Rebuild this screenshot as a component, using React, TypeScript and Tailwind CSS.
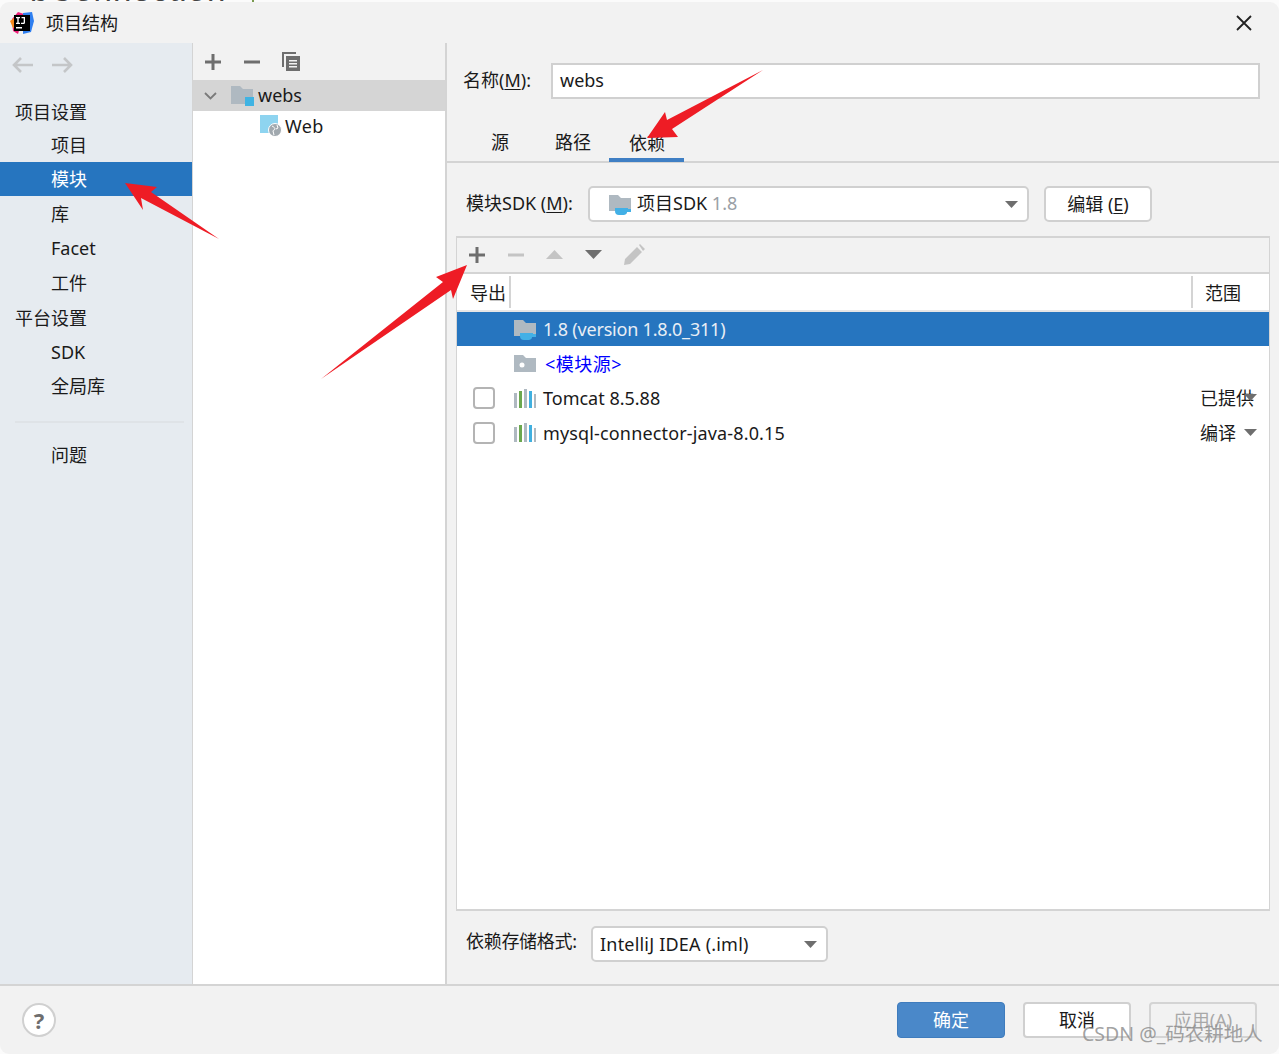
import React from "react";

const Plus = ({ c = "#6e6e6e" }: { c?: string }) => (
  <svg width="16" height="16" viewBox="0 0 16 16"><path d="M6.500 0h3v6.500H16v3H9.500V16h-3V9.500H0v-3h6.500z" fill={c} /></svg>
);
const Minus = ({ c = "#6e6e6e" }: { c?: string }) => (
  <svg width="16" height="16" viewBox="0 0 16 16"><rect x="0" y="6.500" width="16" height="3" fill={c} /></svg>
);
const Caret = ({ c = "#6e6e6e", w = 13, h = 7 }: { c?: string; w?: number; h?: number }) => (
  <svg width={w} height={h} viewBox="0 0 13 7"><path d="M0 0h13L6.500 7z" fill={c} /></svg>
);
const SdkFolder = () => (
  <svg width="22" height="21" viewBox="0 0 22 21">
    <path d="M0 1h9l3 3h10v13H0z" fill="#afb9c1" />
    <path d="M6 14h13v1h3v3h-4a5 3 0 0 1-3 3H10a4 4 0 0 1-4-4z" fill="#42b0e6" />
  </svg>
);
const Lib = () => (
  <svg width="22" height="19" viewBox="0 0 22 19">
    <rect x="0" y="4" width="3" height="15" fill="#afb9c1" />
    <rect x="5" y="2" width="3" height="17" fill="#6ba84f" />
    <rect x="10" y="0" width="3" height="19" fill="#afb9c1" />
    <rect x="15" y="2" width="3" height="17" fill="#40b0e0" />
    <rect x="20" y="5" width="2" height="14" fill="#afb9c1" />
  </svg>
);
const Logo = () => (
  <svg width="24" height="24" viewBox="0 0 24 24">
    <path d="M2 8 8 1l6 2-6 20-5-3z" fill="#f0207a" />
    <path d="M13 2l9-1 2 9-3 11-8 2z" fill="#2f7ff0" />
    <path d="M0 10l4-3 2 9-3 1z" fill="#f78a1e" />
    <rect x="4" y="4" width="16" height="16" fill="#000" />
    <rect x="6" y="16" width="6" height="1.500" fill="#fff" />
    <path d="M6 6h4v1.300H8.700v4.400H10V13H6v-1.300h1.300V7.300H6zM11.500 6H15v5.500a1.500 1.500 0 0 1-1.500 1.500H11v-1.300h2.300a.4.4 0 0 0 .4-.4V7.300h-2.200z" fill="#fff" />
  </svg>
);

const SidebarItem = ({ text, head, selected, short }: { text: string; head?: boolean; selected?: boolean; short?: boolean }) => (
  <div className={`${short ? "h-[32.400px]" : selected ? "h-[34px] mb-[1px]" : "h-[34.400px]"} flex items-center ${head ? "pl-[15px] pt-[2px]" : "pl-[51px]"} ${selected ? "bg-[#2675bf] text-white" : "text-[#1a1a1a]"}`}>{text}</div>
);

const Combo = ({ className, children }: { className: string; children: React.ReactNode }) => (
  <div className={`h-[36px] bg-white border-2 border-[#d0d0d0] rounded-[5px] flex items-center ${className}`}>
    {children}
  </div>
);

const Row = ({ check, icon, children, scope, selected, textClass }: { check?: boolean; icon: React.ReactNode; children: React.ReactNode; scope?: string; selected?: boolean; textClass?: string }) => (
  <div className={`flex items-center ${selected ? "h-[34px] mb-[0.5px] bg-[#2675bf] text-[#e8eef5]" : "h-[34.500px] text-[#1a1a1a]"}`}>
    <div className="w-[57px] pl-[16px] shrink-0">
      {check && <div className="w-[22px] h-[22px] border-2 border-[#b4b4b4] rounded-[4px] bg-white" />}
    </div>
    <div className="w-[22px] shrink-0 flex items-center">{icon}</div>
    <div className={`ml-[7px] flex-1 ${textClass ?? ""}`}>{children}</div>
    {scope && (
      <div className="relative w-[69px] shrink-0">
        {scope}
        <span className="absolute top-[5px] left-[44px] flex"><Caret /></span>
      </div>
    )}
  </div>
);

export default function App() {
  return (
    <div className="relative w-[1279px] h-[1054px] overflow-hidden bg-[#fbfbfb] font-['Noto_Sans','Noto_Sans_CJK_SC',sans-serif] text-[18px] leading-none text-[#1a1a1a]">
      <div className="h-[2px] overflow-hidden pl-[30px] flex text-[33px] leading-[0px] text-[#444] tracking-[1px] font-['Liberation_Sans',sans-serif]">
        <div className="mt-[-10px]">bConnection</div>
        <div className="ml-[26px] w-[2px] h-[2px] bg-[#7a9a50]" />
      </div>
      <div className="h-[1052px] flex flex-col bg-[#f2f2f2] rounded-[9px] overflow-hidden">
        {/* title */}
        <div className="h-[41px] shrink-0 flex items-center pl-[10px] pr-[27px]">
          <Logo />
          <span className="ml-[12px]">项目结构</span>
          <svg className="ml-auto" width="16" height="16" viewBox="0 0 16 16"><path d="M1 1l14 14M15 1L1 15" stroke="#222" strokeWidth="1.800" /></svg>
        </div>
        {/* body */}
        <div className="flex-1 min-h-0 flex border-b-2 border-[#d4d4d4]">
          {/* sidebar */}
          <div className="w-[192px] shrink-0 bg-[#e6ebf0]">
            <div className="h-[52px] flex items-center pl-[12px] pb-[8px] gap-[19px]">
              <svg width="21" height="16" viewBox="0 0 21 16"><path d="M9 1 2 8l7 7M2 8h19" fill="none" stroke="#c4c6c8" strokeWidth="2.600" /></svg>
              <svg width="21" height="16" viewBox="0 0 21 16"><path d="M12 1l7 7-7 7M19 8H0" fill="none" stroke="#c4c6c8" strokeWidth="2.600" /></svg>
            </div>
            <SidebarItem text="项目设置" head short />
            <SidebarItem text="项目" />
            <SidebarItem text="模块" selected />
            <SidebarItem text="库" />
            <SidebarItem text="Facet" />
            <SidebarItem text="工件" />
            <SidebarItem text="平台设置" head />
            <SidebarItem text="SDK" />
            <SidebarItem text="全局库" />
            <div className="h-[34.400px] flex items-center pt-[3px] pl-[15px] pr-[8px]"><div className="w-full h-[2px] bg-[#dfe3e7]" /></div>
            <SidebarItem text="问题" />
          </div>
          {/* middle */}
          <div className="w-[255px] shrink-0 flex flex-col bg-white border-l border-[#d4d4d4] border-r-2">
            <div className="h-[37px] shrink-0 bg-[#f2f2f2] flex items-center pl-[12px]">
              <Plus />
              <span className="ml-[23px] flex"><Minus /></span>
              <svg className="ml-[22px]" width="19" height="20" viewBox="0 0 19 20">
                <path d="M0 0h14v2H2v13H0z" fill="#6e6e6e" />
                <path d="M4 4h14v15H4z" fill="#6e6e6e" />
                <path d="M7 8h8v1.500H7zM7 11h8v1.500H7zM7 14h8v1.500H7z" fill="#f2f2f2" />
              </svg>
            </div>
            <div className="h-[31px] shrink-0 bg-[#d5d5d5] flex items-center pl-[11px]">
              <svg width="13" height="8" viewBox="0 0 13 8"><path d="M1 1l5.500 5.500L12 1" fill="none" stroke="#7a7a7a" strokeWidth="1.800" /></svg>
              <svg className="ml-[14px]" width="23" height="22" viewBox="0 0 23 22">
                <path d="M0 1h9l3 3h10v15H0z" fill="#afb9c1" />
                <rect x="14" y="12" width="9" height="9" fill="#3fb3e3" />
              </svg>
              <span className="ml-[4px] -translate-y-[1px]">webs</span>
            </div>
            <div className="h-[30px] shrink-0 flex items-center pl-[67px]">
              <svg width="22" height="22" viewBox="0 0 22 22">
                <rect x="0" y="0" width="18" height="18" fill="#8ed4f0" />
                <circle cx="15" cy="15" r="6.500" fill="#a0a8ae" stroke="#fff" strokeWidth="1" />
                <path d="M12 11c2 1 3 2 3 3s-2 1-2 2l1 4M17 10l1 3-2 1" fill="none" stroke="#fff" strokeWidth="1" />
              </svg>
              <span className="ml-[3px] tracking-[0.4px]">Web</span>
            </div>
          </div>
          {/* right */}
          <div className="flex-1 min-w-0 flex flex-col">
            <div className="h-[56px] shrink-0 flex items-end pl-[16px] pr-[19px]">
              <div className="h-[36px] flex items-center w-[88px] shrink-0 -translate-y-[1px]">名称(<span className="underline underline-offset-2">M</span>):</div>
              <div className="flex-1 h-[36px] bg-white border-2 border-[#d0d0d0] flex items-center pl-[7px]"><span className="-translate-y-[1px]">webs</span></div>
            </div>
            <div className="h-[64px] shrink-0 flex items-end border-b-2 border-[#d4d4d4] pl-[23px]">
              <div className="w-[60px] h-[33px] flex justify-center pt-[5px]">源</div>
              <div className="w-[86px] h-[33px] flex justify-center pt-[5px]">路径</div>
              <div className="w-[75px] h-[33px] flex justify-center pt-[5px] pl-[1px] border-b-4 border-[#3f7fc4] -mb-[1px] -ml-[7px]">依赖</div>
            </div>
            <div className="h-[73px] shrink-0 flex items-start pt-[23px] pl-[19px]">
              <div className="w-[122px] h-[36px] flex items-center shrink-0 -translate-y-[1px]">模块SDK (<span className="underline underline-offset-2">M</span>):</div>
              <Combo className="w-[441px] pl-[19px] relative">
                <SdkFolder />
                <span className="ml-[6px] -translate-y-[1px]">项目SDK <span className="text-[#9aa0a6]">1.8</span></span>
                <span className="absolute right-[9px] top-[13px] flex"><Caret /></span>
              </Combo>
              <div className="ml-[15px] w-[108px] h-[36px] bg-white border-2 border-[#d0d0d0] rounded-[5px] flex items-center justify-center">编辑 (<span className="underline underline-offset-2">E</span>)</div>
            </div>
            {/* table */}
            <div className="ml-[9px] mr-[9px] flex-1 min-h-0 flex flex-col border-x border-t-2 border-b-2 border-[#d4d4d4] bg-white">
              <div className="h-[36px] shrink-0 bg-[#f2f2f2] border-b-2 border-[#d4d4d4] flex items-center pl-[12px]">
                <Plus />
                <span className="ml-[23px] flex"><Minus c="#c4c4c4" /></span>
                <span className="ml-[22px] flex -translate-y-[1px]"><svg width="17" height="9" viewBox="0 0 17 9"><path d="M0 9h17L8.500 0z" fill="#c4c4c4" /></svg></span>
                <span className="ml-[22px] flex -translate-y-[1px]"><svg width="17" height="9" viewBox="0 0 17 9"><path d="M0 0h17L8.500 9z" fill="#6e6e6e" /></svg></span>
                <svg className="ml-[22px] -translate-y-[1px]" width="21" height="21" viewBox="0 0 21 21"><path d="M0 21l1-6L13 3l5 5L6 20zM15 1l1-1 5 5-2 2z" fill="#c4c4c4" /></svg>
              </div>
              <div className="h-[38px] shrink-0 flex items-center border-b-2 border-[#e6e6e6]">
                <div className="w-[54px] h-[32px] flex items-center justify-end pr-[3px] pt-[2px] border-r-2 border-[#d4d4d4] shrink-0">导出</div>
                <div className="flex-1" />
                <div className="w-[78px] h-[32px] flex items-center pl-[12px] pt-[2px] border-l-2 border-[#d4d4d4] shrink-0">范围</div>
              </div>
              <Row selected textClass="tracking-[-0.2px]" icon={<SdkFolder />}>1.8 (version 1.8.0_311)</Row>
              <Row textClass="text-[#0000ff] tracking-[0.5px] pl-[2px]" icon={
                <svg width="22" height="17" viewBox="0 0 22 17"><path d="M0 0h9l3 3h10v14H0z" fill="#afb9c1" /><circle cx="8" cy="10" r="2.500" fill="#fff" /></svg>
              }>&lt;模块源&gt;</Row>
              <Row check icon={<Lib />} scope="已提供">Tomcat 8.5.88</Row>
              <Row check textClass="tracking-[0.15px]" icon={<Lib />} scope="编译">mysql-connector-java-8.0.15</Row>
            </div>
            <div className="h-[73px] shrink-0 flex items-start pt-[15px] pl-[19px]">
              <span className="w-[125px] h-[36px] flex items-center shrink-0 -translate-y-[3px] tracking-[-0.3px]">依赖存储格式:</span>
              <Combo className="w-[237px] pl-[7px] relative tracking-[0.2px]">
                IntelliJ IDEA (.iml)
                <span className="absolute right-[9px] top-[13px] flex"><Caret /></span>
              </Combo>
            </div>
          </div>
        </div>
        {/* footer */}
        <div className="h-[68px] shrink-0 flex items-center pl-[22px] pr-[22px]">
          <div className="w-[34px] h-[34px] rounded-full bg-white border-2 border-[#d0d0d0] flex items-center justify-center text-[#6e6e6e] font-bold text-[22px]">?</div>
          <div className="ml-auto w-[108px] h-[36px] rounded-[4px] bg-[#4a88c9] border border-[#3f7cbd] text-white flex items-center justify-center">确定</div>
          <div className="ml-[18px] w-[108px] h-[36px] rounded-[4px] bg-white border-2 border-[#d0d0d0] flex items-center justify-center">取消</div>
          <div className="ml-[18px] w-[108px] h-[36px] rounded-[4px] border-2 border-[#d4d4d4] text-[#a8a8a8] flex items-center justify-center">应用(A)</div>
        </div>
      </div>

      {/* annotation arrows */}
      <svg className="absolute inset-0 pointer-events-none" width="1279" height="1054" viewBox="0 0 1279 1054">
        <path d="M125 183 157 187 151 192 219 239 141 198 143 210z" fill="#ee1c25" />
        <path d="M647 138 665 112 667 120 763 70 672 129 678 137z" fill="#ee1c25" />
        <path d="M467 265 436 277 443 282 321 379 451 290 453 299z" fill="#ee1c25" />
      </svg>
      {/* watermark */}
      <div className="absolute left-[1082px] top-[1024px] text-[19.500px] text-[#8a8a8a]/80 whitespace-nowrap">CSDN @_码农耕地人</div>
    </div>
  );
}
